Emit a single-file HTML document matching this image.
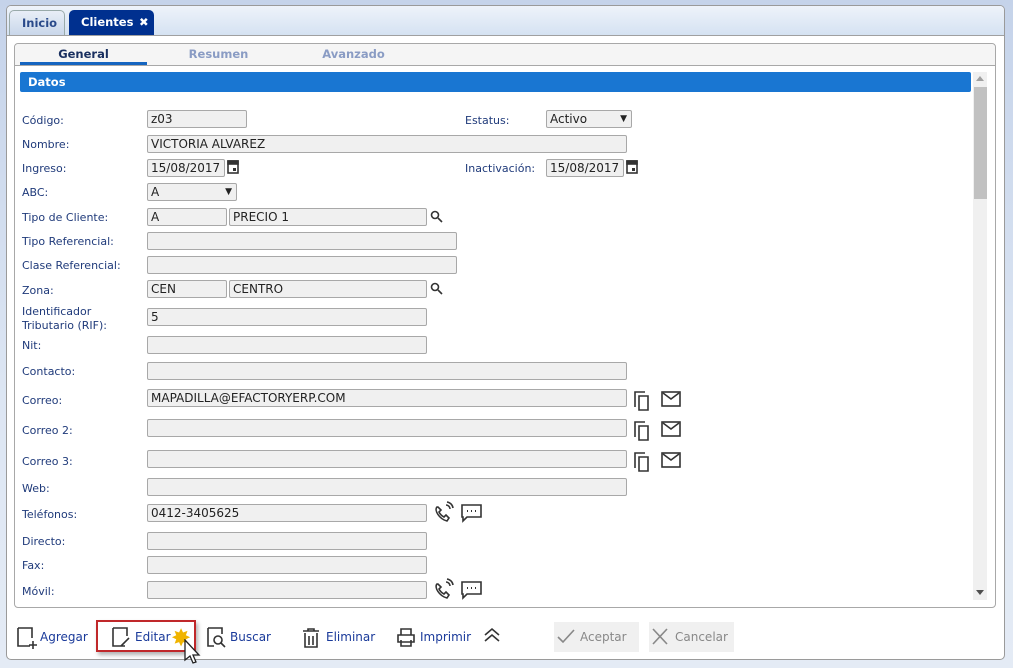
<!DOCTYPE html>
<html><head><meta charset="utf-8"><style>
*{box-sizing:border-box;margin:0;padding:0}
body{width:1013px;height:668px;background:linear-gradient(#c5d3ea,#dde6f3 60%,#e4ebf5);font-family:"DejaVu Sans","Liberation Sans",sans-serif;position:relative;overflow:hidden}
.a{position:absolute}
.outer{left:6px;top:5px;width:999px;height:655px;background:#fff;border:1px solid #9a9a9a;border-radius:5px}
.tabbar{left:7px;top:6px;width:997px;height:30px;background:linear-gradient(#eef3fa,#d5e2f2);border-bottom:1px solid #a0a0a0;border-radius:4px 4px 0 0}
.tab{top:10px;height:25px;border-radius:5px 5px 0 0;font-weight:bold;font-size:11.5px;line-height:24px;padding-left:12px}
.inner{left:14px;top:43px;width:982px;height:565px;border:1px solid #a8a8a8;border-radius:4px;background:#fff}
.sub{top:44px;height:21px;font-weight:bold;font-size:11.5px;text-align:center;line-height:20px;color:#8a9cc4}
.lbl{left:22px;font-size:11px;color:#1f3a7a;line-height:14px;margin-top:1px}
.in{background:#f0f0f0;border:1px solid #a8a8a8;border-radius:2px;height:18px;font-size:12px;line-height:17px;padding-left:3px;color:#222}
.btn{top:626px;font-size:12px;color:#1a3a9a;line-height:22px}
</style></head><body>
<div class="a outer"></div>
<div class="a tabbar"></div>
<div class="a tab" style="left:9px;width:56px;background:linear-gradient(#e8eef7,#c9d7ea);border:1px solid #9aa;border-bottom:none;color:#2a4a8a">Inicio</div>
<div class="a tab" style="left:69px;width:85px;background:#00308f;color:#fff">Clientes<span style="position:absolute;left:70px">✖</span></div>
<div class="a inner"></div>
<div class="a" style="left:15px;top:44px;width:980px;height:22px;background:#f5f5f5;border-bottom:1px solid #a8a8a8;border-radius:4px 4px 0 0"></div>
<div class="a sub" style="left:20px;width:127px;color:#1a3060;border-bottom:3px solid #1565c0">General</div>
<div class="a sub" style="left:155px;width:127px">Resumen</div>
<div class="a sub" style="left:290px;width:127px">Avanzado</div>
<div class="a" style="left:20px;top:72px;width:951px;height:20px;background:#1976d2;border-radius:2px;color:#fff;font-weight:bold;font-size:11.5px;line-height:20px;padding-left:8px">Datos</div>
<div class="a" style="left:973px;top:72px;width:14px;height:528px;background:#f0f0f0"></div>
<div class="a" style="left:974px;top:87px;width:13px;height:112px;background:#c1c1c1"></div>
<div class="a" style="left:976px;top:76px;border:4px solid transparent;border-bottom:5px solid #a0a0a0;border-top:none"></div>
<div class="a" style="left:976px;top:590px;border:4px solid transparent;border-top:5px solid #505050;border-bottom:none"></div>

<div class="a lbl" style="top:113px">Código:</div><div class="a in" style="left:147px;top:110px;width:100px">z03</div>
<div class="a lbl" style="top:137px">Nombre:</div><div class="a in" style="left:147px;top:135px;width:480px">VICTORIA ALVAREZ</div>
<div class="a lbl" style="top:161px">Ingreso:</div><div class="a in" style="left:147px;top:159px;width:78px">15/08/2017</div>
<div class="a lbl" style="left:465px;top:113px">Estatus:</div><div class="a in" style="left:546px;top:110px;width:86px">Activo<span style="position:absolute;right:4px;font-size:9px">▼</span></div>
<div class="a lbl" style="left:465px;top:161px">Inactivación:</div><div class="a in" style="left:546px;top:159px;width:78px">15/08/2017</div>
<div class="a lbl" style="top:185px">ABC:</div><div class="a in" style="left:147px;top:183px;width:90px">A<span style="position:absolute;right:4px;font-size:9px">▼</span></div>
<div class="a lbl" style="top:210px">Tipo de Cliente:</div><div class="a in" style="left:147px;top:208px;width:80px">A</div><div class="a in" style="left:229px;top:208px;width:198px">PRECIO 1</div>
<div class="a lbl" style="top:234px">Tipo Referencial:</div><div class="a in" style="left:147px;top:232px;width:310px"></div>
<div class="a lbl" style="top:258px">Clase Referencial:</div><div class="a in" style="left:147px;top:256px;width:310px"></div>
<div class="a lbl" style="top:283px">Zona:</div><div class="a in" style="left:147px;top:280px;width:80px">CEN</div><div class="a in" style="left:229px;top:280px;width:198px">CENTRO</div>
<div class="a lbl" style="top:304px">Identificador<br>Tributario (RIF):</div><div class="a in" style="left:147px;top:308px;width:280px">5</div>
<div class="a lbl" style="top:338px">Nit:</div><div class="a in" style="left:147px;top:336px;width:280px"></div>
<div class="a lbl" style="top:364px">Contacto:</div><div class="a in" style="left:147px;top:362px;width:480px"></div>
<div class="a lbl" style="top:393px">Correo:</div><div class="a in" style="left:147px;top:389px;width:480px">MAPADILLA@EFACTORYERP.COM</div>
<div class="a lbl" style="top:423px">Correo 2:</div><div class="a in" style="left:147px;top:419px;width:480px"></div>
<div class="a lbl" style="top:454px">Correo 3:</div><div class="a in" style="left:147px;top:450px;width:480px"></div>
<div class="a lbl" style="top:481px">Web:</div><div class="a in" style="left:147px;top:478px;width:480px"></div>
<div class="a lbl" style="top:507px">Teléfonos:</div><div class="a in" style="left:147px;top:504px;width:280px">0412-3405625</div>
<div class="a lbl" style="top:534px">Directo:</div><div class="a in" style="left:147px;top:532px;width:280px"></div>
<div class="a lbl" style="top:558px">Fax:</div><div class="a in" style="left:147px;top:556px;width:280px"></div>
<div class="a lbl" style="top:584px">Móvil:</div><div class="a in" style="left:147px;top:581px;width:280px"></div>

<svg class="a" style="left:0;top:0" width="1013" height="668" fill="none" stroke="#333" stroke-width="1.6">
<g id="cal"><rect x="228" y="161" width="10" height="12" fill="none"/><rect x="228" y="161" width="10" height="3" fill="#333"/><rect x="233" y="168" width="3" height="3" fill="#333" stroke="none"/></g>
<use href="#cal" x="399"/>
<g id="srch"><circle cx="435" cy="215" r="3.5"/><line x1="438" y1="218" x2="442" y2="222"/></g>
<use href="#srch" y="72"/>
<g id="mail"><path d="M635 407v-15h10M639 396h9v14h-9z"/><rect x="662" y="392" width="18" height="14" fill="none"/><path d="M663 393l8 6 8-6"/></g>
<use href="#mail" y="30"/><use href="#mail" y="61"/>
<g id="ph"><path d="M437 507c-3 3 2 12 10 14l2-3-3-3-2 2c-2-1-4-3-5-5l2-2-3-3z"/><path d="M446 505a4 4 0 0 1 4 4M447 502a7 7 0 0 1 6 6"/><path d="M462 505h19v12h-14l-4 4v-4h-1z"/><path d="M467 511h1M471 511h1M475 511h1" stroke-width="2"/></g>
<use href="#ph" y="77"/>
<path d="M18 628v18h12M18 628h14v10M33 641v8M29 645h8"/>
<path d="M113 628v18h12M113 628h14v8M121 646l8-8" />
<path d="M208 628v18h6M208 628h14v6"/><circle cx="218" cy="640" r="4"/><path d="M221 643l4 4"/>
<path d="M303 631h16M308 631v-2h6v2M305 633v14h12v-14M309 636v9M313 636v9"/>
<path d="M401 635v-6h10v6M398 635h16v7h-16zM401 640v6h10v-6"/>
<path d="M485 635l7-6 7 6M485 641l7-6 7 6"/>
</svg>
<div class="a" style="left:96px;top:620px;width:100px;height:32px;border:2px solid #c0282a;box-shadow:2px 3px 4px rgba(0,0,0,.3)"></div>
<div class="a btn" style="left:40px">Agregar</div>
<div class="a btn" style="left:135px">Editar</div>
<div class="a btn" style="left:230px">Buscar</div>
<div class="a btn" style="left:326px">Eliminar</div>
<div class="a btn" style="left:420px">Imprimir</div>
<div class="a" style="left:171px;top:624px;color:#f0b400;font-size:24px">✸</div>
<svg class="a" style="left:183px;top:639px" width="20" height="28"><path d="M2 1v20l5-4 3 7 3-1-3-7h6z" fill="#fff" stroke="#222" stroke-width="1.3"/></svg>
<div class="a" style="left:554px;top:622px;width:85px;height:30px;background:#f0f0f0;color:#888;font-size:12px;line-height:30px;padding-left:26px">Aceptar</div>
<div class="a" style="left:649px;top:622px;width:85px;height:30px;background:#f0f0f0;color:#888;font-size:12px;line-height:30px;padding-left:26px">Cancelar</div>
<svg class="a" style="left:0;top:0" width="1013" height="668" fill="none" stroke="#888" stroke-width="1.6"><path d="M558 637l5 5 11-12M653 629l14 15M667 629l-14 15"/></svg>
</body></html>
